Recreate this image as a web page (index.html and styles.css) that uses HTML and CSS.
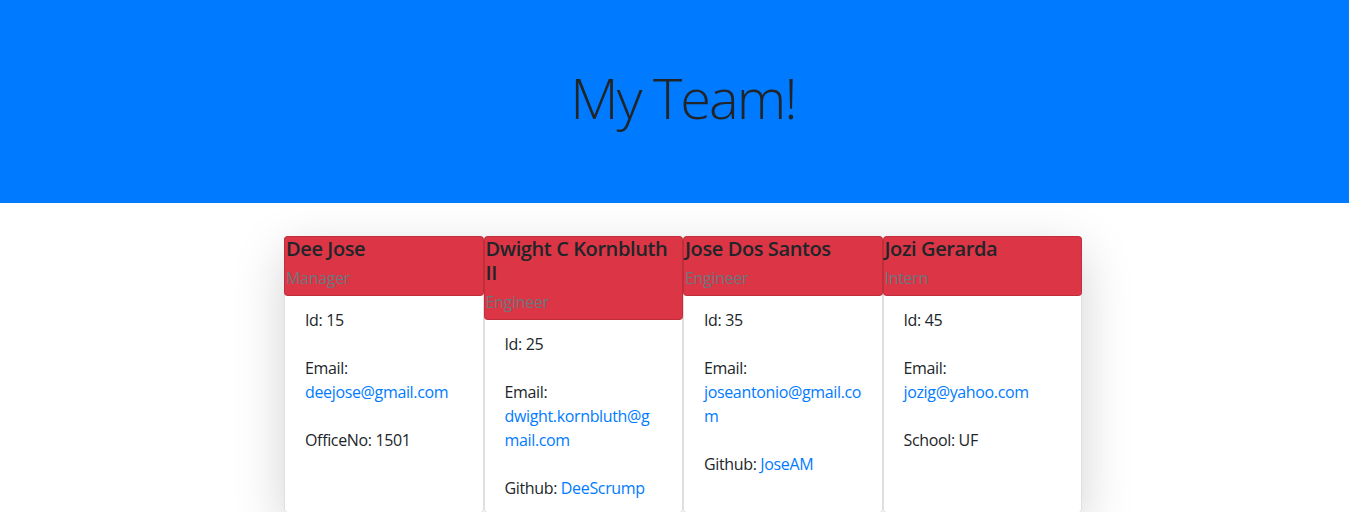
FILE: index.html
```html
<!DOCTYPE html>
<html lang="en">
<head>
<meta charset="utf-8">
<title>My Team</title>
<link rel="stylesheet" href="styles.css">
</head>
<body>
<div class="page">
  <header class="jumbotron">
    <h1 class="display">My Team!</h1>
  </header>
  <main class="team">
    <div class="deck">
      <div class="card">
        <div class="card-header">
          <h5 class="card-title">Dee Jose</h5>
          <h6 class="card-subtitle">Manager</h6>
        </div>
        <ul class="list">
          <li class="item">Id: 15</li>
          <li class="item">Email: <a href="#">deejose@gmail.com</a></li>
          <li class="item">OfficeNo: 1501</li>
        </ul>
      </div>
      <div class="card">
        <div class="card-header">
          <h5 class="card-title">Dwight C Kornbluth II</h5>
          <h6 class="card-subtitle">Engineer</h6>
        </div>
        <ul class="list">
          <li class="item">Id: 25</li>
          <li class="item">Email: <a href="#">dwight.kornbluth@gmail.com</a></li>
          <li class="item">Github: <a href="#">DeeScrump</a></li>
        </ul>
      </div>
      <div class="card">
        <div class="card-header">
          <h5 class="card-title">Jose Dos Santos</h5>
          <h6 class="card-subtitle">Engineer</h6>
        </div>
        <ul class="list">
          <li class="item">Id: 35</li>
          <li class="item">Email: <a href="#">joseantonio@gmail.com</a></li>
          <li class="item">Github: <a href="#">JoseAM</a></li>
        </ul>
      </div>
      <div class="card">
        <div class="card-header">
          <h5 class="card-title">Jozi Gerarda</h5>
          <h6 class="card-subtitle">Intern</h6>
        </div>
        <ul class="list">
          <li class="item">Id: 45</li>
          <li class="item">Email: <a href="#">jozig@yahoo.com</a></li>
          <li class="item">School: UF</li>
        </ul>
      </div>
    </div>
  </main>
</div>
</body>
</html>
```

FILE: styles.css
```css
html {
  overflow: hidden;
}
body {
  margin: 0;
  font-family: "Open Sans", "Noto Sans", sans-serif;
  font-size: 16px;
  line-height: 1.5;
  color: #212529;
  background: #fff;
}
.page {
  width: 1366px;
}
.jumbotron {
  background: #007bff;
  padding: 64px 32px;
  margin-bottom: 33px;
  text-align: center;
}
.display {
  margin: 0 0 8px;
  font-size: 56px;
  font-weight: 300;
  line-height: 1.2;
  letter-spacing: -2px;
  color: #212529;
}
.team {
  display: flex;
  justify-content: center;
}
.deck {
  display: flex;
  box-shadow: 0 16px 48px rgba(0, 0, 0, 0.175);
}
.card {
  width: 199.5px;
  box-sizing: border-box;
  border: 1px solid rgba(0, 0, 0, 0.125);
  border-radius: 4px;
  background: #fff;
  display: flex;
  flex-direction: column;
}
.card-header {
  margin: -1px -1px 0;
  background: #dc3545;
  border: 1px solid rgba(0, 0, 0, 0.125);
  border-radius: 4px;
}
.card-title {
  margin: 0 0 8px;
  padding-left: 1px;
  font-size: 20px;
  font-weight: 600;
  line-height: 1.2;
  letter-spacing: -0.4px;
  color: #212529;
}
.card-subtitle {
  margin: 0 0 7px;
  padding-left: 1px;
  font-size: 16px;
  font-weight: 400;
  line-height: 1.2;
  letter-spacing: -0.3px;
  color: #6c757d;
}
.list {
  list-style: none;
  margin: 0;
  padding: 0;
}
.item {
  padding: 12px 20px;
  overflow-wrap: break-word;
  letter-spacing: -0.35px;
}
.item a {
  color: #007bff;
  text-decoration: none;
}
```
